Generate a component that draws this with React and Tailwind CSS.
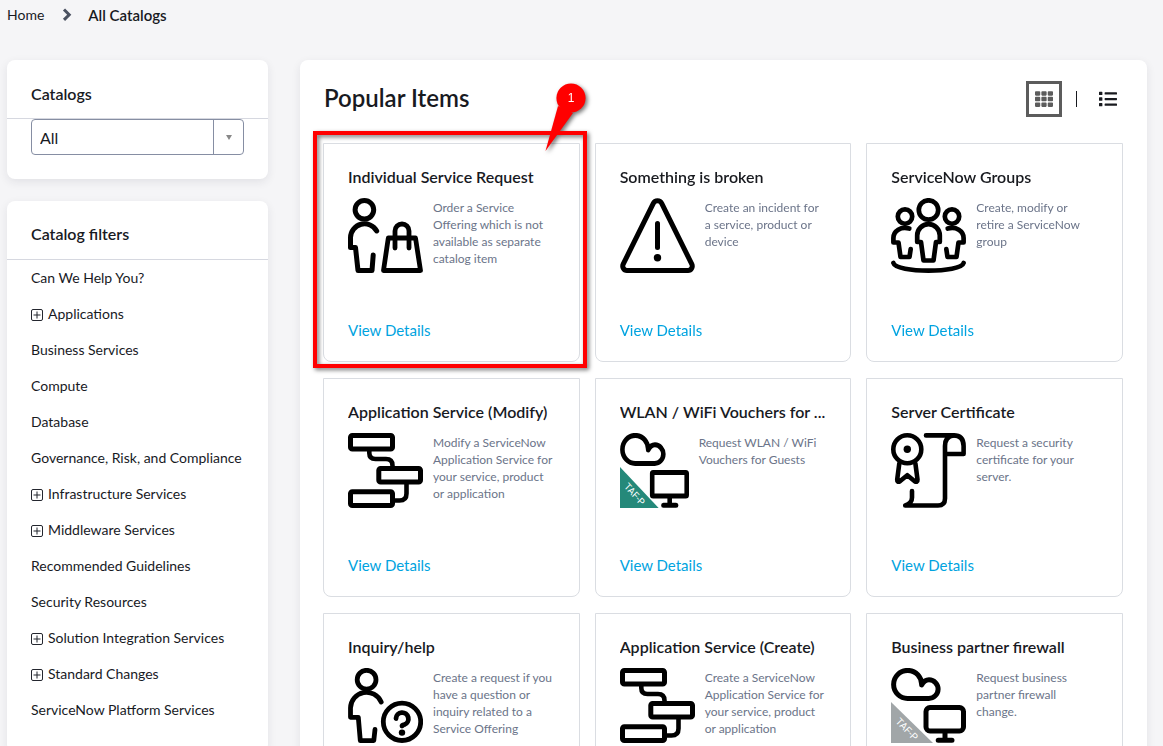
import React from "react";
import { FaTh, FaList } from "react-icons/fa";

function Icon({ className = "w-[75px]", children }) {
  return (
    <svg
      viewBox="0 0 75 75"
      preserveAspectRatio="none"
      className={`h-[75px] shrink-0 ${className}`}
      fill="none"
      stroke="#000"
      strokeWidth="5"
      strokeLinecap="round"
      strokeLinejoin="round"
      aria-hidden="true"
    >
      {children}
    </svg>
  );
}

function PersonBagIcon() {
  return (
    <Icon>
      <circle cx="16.4" cy="11.8" r="9.3" />
      <path d="M28.7 33 A14 14 0 0 0 2.5 39.5 V49.5 H7.5 L10 72.5 H24 L25.2 57" />
      <path d="M40.3 40 H67.5 L72.5 72.5 H35.5 Z" strokeWidth="4.8" />
      <path d="M47 50 V33 A7 7 0 0 1 61 33 V50" strokeWidth="4.8" />
    </Icon>
  );
}

function WarningIcon() {
  return (
    <Icon>
      <path d="M41.7 5.3 L71.8 66.2 A4.4 4.4 0 0 1 68 72.5 H7 A4.4 4.4 0 0 1 3.2 66.2 L33.3 5.3 A4.7 4.7 0 0 1 41.7 5.3 Z" />
      <path d="M37.5 25.5 V49.5" />
      <circle cx="37.5" cy="59.8" r="3.7" fill="#000" stroke="none" />
    </Icon>
  );
}

function GroupIcon() {
  const side = (
    <>
      <circle cx="14" cy="18.6" r="7.2" />
      <path d="M18.3 30.6 C10 28 2.4 33 2.4 40 V44.5 H7.5 L9.5 59 H18.5 L19.7 51" />
    </>
  );
  return (
    <Icon>
      <g strokeWidth="4.7">
        {side}
        <g transform="translate(75 0) scale(-1 1)">{side}</g>
        <circle cx="37.5" cy="12" r="9.7" />
        <path d="M26.2 44 V37.5 A11.3 11.3 0 0 1 48.8 37.5 V44 H45 L42.5 62.5 H32.5 L30 44 Z" />
        <path d="M2.4 65 C5 75.2 70 75.2 72.6 65" />
      </g>
    </Icon>
  );
}

function FlowIcon() {
  return (
    <Icon>
      <rect x="2.5" y="2.5" width="42" height="13.6" rx="1.8" />
      <rect x="30.8" y="35.5" width="41.7" height="13.6" rx="1.8" />
      <rect x="2.5" y="58.7" width="42" height="13.8" rx="1.8" />
      <path d="M21.3 17 V20 Q21.3 26 27.5 26 H38 Q44.5 26 44.5 32.5 V35" strokeWidth="4.6" />
      <path d="M58.5 50 V60.5 Q58.5 67.5 51.5 67.5 H46" strokeWidth="4.6" />
    </Icon>
  );
}

function CloudIcon({ className, radius, color }) {
  return (
    <Icon className={className}>
      <path d="M0 34 L42 75 H0 Z" fill={color} stroke="none" />
      <text
        x="0"
        y="0"
        transform="translate(4 54) rotate(46)"
        fill="#fff"
        stroke="none"
        fontSize="10"
        fontFamily="Roboto, sans-serif"
      >
        TAF-P
      </text>
      <path d="M17 30.4 A14 14 0 1 1 30.6 17 Q33.5 11.8 38 11.8 A9.3 9.3 0 0 1 37.6 30.4 Z" />
      <rect x="35" y="39.6" width="37.5" height="23.4" rx={radius} />
      <path d="M54 64 V72.3 M47.2 72.3 H61" />
    </Icon>
  );
}

function CertificateIcon() {
  return (
    <Icon>
      <g strokeWidth="4.6">
        <circle cx="16.3" cy="16.3" r="14" />
        <circle cx="16.3" cy="16.3" r="3.7" fill="#000" stroke="none" />
        <path d="M8.3 30.5 L6.2 46.5 Q6 50.2 9.2 48 L16.3 42.2 L23.4 48 Q26.7 50.2 26.5 46.5 L24.4 30.5" />
        <path d="M35 2.4 H62.5 Q72.6 2.4 72.6 13 V21 H55" />
        <path d="M62.5 2.4 Q54 3.5 54 13 V65.5 Q54 72.5 47 72.5 H14.2 Q21 70.5 21 64.5 V58" />
      </g>
    </Icon>
  );
}

function PersonHelpIcon() {
  return (
    <Icon>
      <g strokeWidth="4.8">
        <circle cx="18.6" cy="11.7" r="9.4" />
        <path d="M33.2 34 A16 16 0 0 0 2.5 40 V49.3 H10.3 L12.3 72.6 H25.8 L27 61.5" />
        <circle cx="54" cy="53.8" r="18.7" />
        <path d="M48 50.5 A6.2 6.2 0 1 1 56.5 56.6 Q54 57 54 58" />
      </g>
      <circle cx="54" cy="64.6" r="3.2" fill="#000" stroke="none" />
    </Icon>
  );
}

const items = [
  {
    title: "Individual Service Request",
    text: "Order a Service Offering which is not available as separate catalog item",
    icon: <PersonBagIcon />,
    marked: true,
  },
  {
    title: "Something is broken",
    text: "Create an incident for a service, product or device",
    icon: <WarningIcon />,
  },
  {
    title: "ServiceNow Groups",
    text: "Create, modify or retire a ServiceNow group",
    icon: <GroupIcon />,
  },
  {
    title: "Application Service (Modify)",
    text: "Modify a ServiceNow Application Service for your service, product or application",
    icon: <FlowIcon />,
  },
  {
    title: "WLAN / WiFi Vouchers for ...",
    text: "Request WLAN / WiFi Vouchers for Guests",
    icon: <CloudIcon className="w-[69px]" radius="1" color="#25897a" />,
  },
  {
    title: "Server Certificate",
    text: "Request a security certificate for your server.",
    icon: <CertificateIcon />,
  },
  {
    title: "Inquiry/help",
    text: "Create a request if you have a question or inquiry related to a Service Offering",
    icon: <PersonHelpIcon />,
  },
  {
    title: "Application Service (Create)",
    text: "Create a ServiceNow Application Service for your service, product or application",
    icon: <FlowIcon />,
  },
  {
    title: "Business partner firewall",
    text: "Request business partner firewall change.",
    icon: <CloudIcon className="w-[75px]" radius="4" color="#a1a6a8" />,
  },
];

const filters = [
  { name: "Can We Help You?" },
  { name: "Applications", expandable: true },
  { name: "Business Services" },
  { name: "Compute" },
  { name: "Database" },
  { name: "Governance, Risk, and Compliance" },
  { name: "Infrastructure Services", expandable: true },
  { name: "Middleware Services", expandable: true },
  { name: "Recommended Guidelines" },
  { name: "Security Resources" },
  { name: "Solution Integration Services", expandable: true },
  { name: "Standard Changes", expandable: true },
  { name: "ServiceNow Platform Services" },
];

function Callout() {
  return (
    <div className="pointer-events-none absolute -top-[13px] -right-2 -bottom-[7px] -left-[11px] border-4 border-[#ff0000] drop-shadow-[2px_2px_2px_rgba(0,0,0,0.55)]">
      <svg
        viewBox="0 0 44 72"
        className="absolute -top-[54px] -right-1 h-[72px] w-11 overflow-visible"
        aria-hidden="true"
      >
        <path d="M2.5 70 L15 25 L30 32 Z" fill="#ff0000" />
        <circle cx="28" cy="17" r="14.6" fill="#ff0000" />
        <text
          x="28"
          y="21"
          textAnchor="middle"
          fill="#fff"
          fontSize="12"
          fontFamily="Liberation Sans, sans-serif"
        >
          1
        </text>
      </svg>
    </div>
  );
}

function ItemCard({ item }) {
  return (
    <article className="relative flex h-[219px] min-w-0 flex-col rounded-b-lg border border-[#dadde2] px-6 pt-[21px] pb-[21px]">
      <h3 className="truncate text-base leading-6 font-semibold text-[#181a1f]">{item.title}</h3>
      <div className="mt-[9px] flex items-start gap-[10px]">
        {item.icon}
        <p className="w-[122px] pt-px text-xs leading-[17px] text-[#6b7489]">{item.text}</p>
      </div>
      <a href="#details" className="mt-auto self-start text-[15px] leading-5 text-[#00a3e0]">
        View Details
      </a>
      {item.marked && <Callout />}
    </article>
  );
}

function PlusBox() {
  return (
    <svg viewBox="0 0 12 12" className="mt-px h-3 w-3 shrink-0" fill="none" stroke="#23262e" aria-hidden="true">
      <rect x="0.5" y="0.5" width="11" height="11" rx="1.5" />
      <path d="M6 2.5 V9.5 M2.5 6 H9.5" />
    </svg>
  );
}

const panel = "rounded-lg bg-white shadow-[0_3px_10px_rgba(30,35,60,0.09)]";

export default function App() {
  return (
    <div className="h-screen overflow-hidden bg-[#f5f5f7] pr-4 pl-[7px] font-['Lato',sans-serif] text-[#181a1f]">
      <nav aria-label="Breadcrumb" className="flex h-[60px] items-start pt-[5px]">
        <a href="#home" className="text-sm leading-5">
          Home
        </a>
        <svg
          viewBox="0 0 10 14"
          className="mt-[3px] mr-4 ml-[18px] h-[14px] w-[10px]"
          fill="none"
          stroke="#4a5160"
          strokeWidth="3"
          aria-hidden="true"
        >
          <path d="M2 1.5 L7.2 6.7 L2 11.9" />
        </svg>
        <span className="text-[15px] leading-5 font-semibold" aria-current="page">
          All Catalogs
        </span>
      </nav>
      <div className="flex items-start gap-8">
        <aside className="flex w-[261px] shrink-0 flex-col gap-[22px]">
          <section className={`${panel} pb-6`}>
            <h2 className="border-b border-[#d6d8e0] px-6 pt-[22px] pb-3 text-base leading-6 font-semibold">
              <label htmlFor="catalog">Catalogs</label>
            </h2>
            <div className="mx-6 grid h-9">
              <select
                id="catalog"
                className="col-start-1 row-start-1 w-full appearance-none rounded border border-[#868ea3] bg-white px-2 pt-[2px] text-base"
              >
                <option>All</option>
              </select>
              <span className="pointer-events-none col-start-1 row-start-1 flex w-[31px] items-center justify-center justify-self-end border-l border-[#868ea3]">
                <svg viewBox="0 0 6 5" className="h-[5px] w-[6px]" fill="#888" aria-hidden="true">
                  <path d="M0 0 H6 L3 5 Z" />
                </svg>
              </span>
            </div>
          </section>
          <section className={`${panel} pb-6`}>
            <h2 className="border-b border-[#d6d8e0] px-6 pt-[21px] pb-[13px] text-base leading-6 font-semibold">
              Catalog filters
            </h2>
            <ul className="px-6">
              {filters.map((f) => (
                <li key={f.name}>
                  <a href="#category" className="flex h-9 items-center gap-[5px] text-sm">
                    {f.expandable && <PlusBox />}
                    {f.name}
                  </a>
                </li>
              ))}
            </ul>
          </section>
        </aside>
        <main className={`${panel} min-w-0 flex-1 pt-5 pr-6 pb-6 pl-[23px]`}>
          <div className="mb-[25px] flex h-[38px] items-center justify-between pl-px">
            <h1 className="mb-[2px] text-2xl leading-8 font-semibold">Popular Items</h1>
            <div className="flex items-center pr-[6px]">
              <button
                type="button"
                aria-label="Card view"
                className="flex h-9 w-9 items-center justify-center border-[3px] border-[#5c5c5c] text-[#5c5c5c]"
              >
                <FaTh className="h-[18px] w-[18px]" />
              </button>
              <span className="mr-[22px] ml-[14px] h-4 w-px bg-[#181a1f]" />
              <button type="button" aria-label="List view">
                <FaList className="h-[18px] w-[18px]" />
              </button>
            </div>
          </div>
          <div className="grid grid-cols-3 gap-x-[15px] gap-y-4">
            {items.map((item) => (
              <ItemCard key={item.title} item={item} />
            ))}
          </div>
        </main>
      </div>
    </div>
  );
}
